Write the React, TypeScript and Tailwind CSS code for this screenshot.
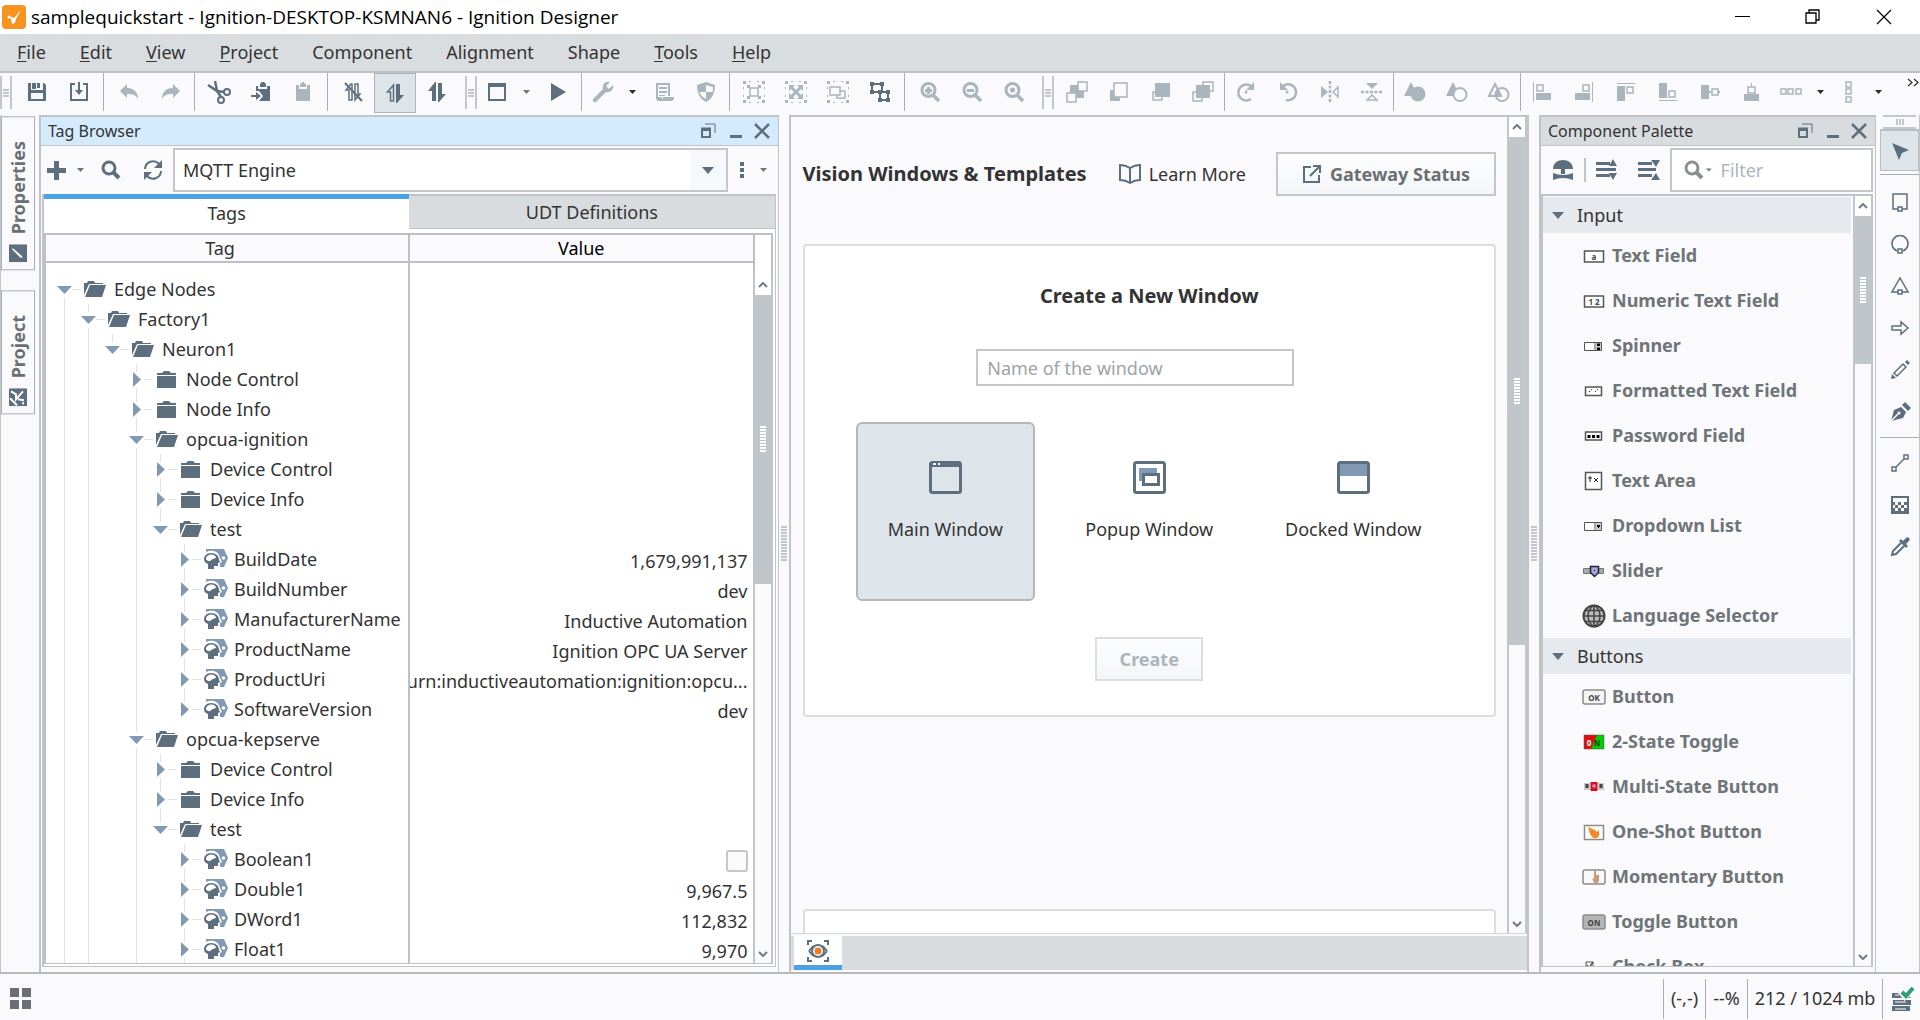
import { useState } from "react";
import type { ReactNode } from "react";

function Icon({ size = 24, className = "", children }: { size?: number; className?: string; children: ReactNode }) {
  return (
    <svg width={size} height={size} viewBox="0 0 24 24" fill="currentColor" aria-hidden className={`shrink-0 ${className}`}>
      {children}
    </svg>
  );
}

const line = { fill: "none", stroke: "currentColor", strokeWidth: 2 };
const thin = { fill: "none", stroke: "currentColor", strokeWidth: 1.5 };

const corners = (
  <path d="M1 1h3v3H1zM20 1h3v3h-3zM1 20h3v3H1zM20 20h3v3h-3zM7 1h2v1H7zM15 1h2v1h-2zM7 22h2v1H7zM15 22h2v1h-2zM1 7h1v2H1zM1 15h1v2H1zM22 7h1v2h-1zM22 15h1v2h-1z" />
);
const lens = (
  <>
    <circle cx="10.500" cy="10" r="6.500" {...line} strokeWidth={3} />
    <path d="M15 15l6 6" {...line} strokeWidth={3.5} />
  </>
);

const icons: Record<string, ReactNode> = {
  save: <path d="M3 3h3v7h12V3h1l2 2v16h-3v-8H6v8H3zM12 3h3v5h-3zM7 3h4v6H7zM6 19h12v2H6z" fillRule="evenodd" />,
  export: (
    <>
      <path d="M8 4H4v16h16V4h-4" {...line} />
      <path d="M11 2h2v8h3l-4 5-4-5h3z" />
    </>
  ),
  undo: <path d="M10 4v4c7 0 11 4 11 11-2-4-5-5-11-5v4l-7-7z" />,
  redo: <path d="M14 4v4C7 8 3 12 3 19c2-4 5-5 11-5v4l7-7z" />,
  cut: (
    <>
      <path d="M8 1l2 10 4 6M1 5l9 6 7 1" {...line} strokeWidth={2.5} />
      <circle cx="14" cy="20" r="3" {...line} />
      <circle cx="20" cy="12" r="3" {...line} />
    </>
  ),
  paste: (
    <>
      <path d="M7 6h2v3h9V6h3v15H10l4-5-4-5H7zM11 4l2-2h2l2 2v3h-6z" />
      <path d="M2 15h5v-3l5 4-5 4v-3H2z" />
    </>
  ),
  clipboard: <path d="M5 5h3v4h8V5h3v16H5zM9 4l2-1V2h2v1l2 1v3H9z" />,
  readOff: (
    <>
      <path d="M10 4l-5 6h3v10h3V4zM14 4v16l5-6h-2V4z" {...thin} />
      <path d="M4 3l17 18" {...line} />
    </>
  ),
  readOn: (
    <>
      <path d="M10.500 4l-6 7h3v9h3V4z" {...thin} />
      <path d="M13 3h4v11h4l-7 8h-1z" />
    </>
  ),
  readWrite: <path d="M11 2v19H7V11H3l7-9zM13 3h4v11h4l-7 8h-1z" />,
  window: (
    <>
      <rect x="4" y="4" width="16" height="16" {...line} />
      <path d="M3 3h18v4H3z" />
    </>
  ),
  play: <path d="M5 3l15 9-15 9z" />,
  wrench: <path d="M2 19L12 9c-1-4 2-8 7-7l-4 4 3 3 4-4c1 5-3 8-7 7L5 22c-2 1-4-1-3-3z" />,
  script: (
    <>
      <path d="M4 4h13v12M5 4v14h5" {...line} />
      <path d="M7 7h8v2H7zM7 11h8v2H7zM7 15h6v1H7zM11 17h11v2l-2 2H6l-2-2h7z" />
    </>
  ),
  shield: (
    <>
      <path d="M12 2l9 3c0 8-3 14-9 17C6 19 3 13 3 5z" />
      <path d="M12 5v7h6.500c.5-2 .5-3 .5-5zM12 12H5.500c1 3 3 5 6.500 7z" fill="#fafafd" />
    </>
  ),
  group: (
    <>
      {corners}
      <rect x="8" y="8" width="8" height="8" {...thin} />
      <path d="M5 5h3v3H5zM16 5h3v3h-3zM5 16h3v3H5zM16 16h3v3h-3z" />
    </>
  ),
  expand: (
    <>
      {corners}
      <path d="M5 5h6L9 7l3 3 3-3-2-2h6v6l-2-2-3 3 3 3 2-2v6h-6l2-2-3-3-3 3 2 2H5v-6l2 2 3-3-3-3-2 2z" />
    </>
  ),
  ungroup: (
    <>
      {corners}
      <path d="M4 7h10v8H4zM14 11h5v7h-8v-3" {...thin} />
    </>
  ),
  combine: (
    <>
      <path d="M4 4h10v8H4zM13 12h7v8h-8v-8" {...line} />
      <path d="M2 2h4v4H2zM12 2h4v4h-4zM2 10h4v4H2zM10 10h4v4h-4zM18 10h4v4h-4zM18 18h4v4h-4zM10 18h4v4h-4z" />
    </>
  ),
  zoomIn: (
    <>
      {lens}
      <path d="M9 7h3v2h2v3h-2v2H9v-2H7V9h2z" />
    </>
  ),
  zoomOut: (
    <>
      {lens}
      <path d="M7 9h7v3H7z" />
    </>
  ),
  zoomReset: (
    <>
      {lens}
      <circle cx="10.500" cy="10" r="2.500" />
    </>
  ),
  orderBackward: (
    <>
      <path d="M5 5h14v13H5z" />
      <path d="M13 2h9v9h-9zM2 13h9v9H2z" fill="#fafafd" stroke="currentColor" strokeWidth="1.500" />
    </>
  ),
  sendBack: (
    <>
      <path d="M3 10h10v11H3z" />
      <path d="M7 3h13v14H7z" fill="#fafafd" stroke="currentColor" strokeWidth="1.500" />
    </>
  ),
  bringFront: (
    <>
      <path d="M4 12h9v8H4z" {...thin} />
      <path d="M6 3h15v14H6z" />
    </>
  ),
  orderForward: (
    <>
      <path d="M12 2h10v9H12zM2 12h9v9H2z" {...thin} />
      <path d="M5 5h14v13H5z" />
    </>
  ),
  rotateCw: (
    <>
      <path d="M17 6a8 8 0 1 0 0 13" {...line} strokeWidth={2.5} />
      <path d="M20 2v8h-8z" />
      <circle cx="12" cy="12" r="1.500" />
    </>
  ),
  rotateCcw: (
    <>
      <path d="M7 6a8 8 0 1 1 3 14" {...line} strokeWidth={2.5} />
      <path d="M4 2v8h8z" />
      <circle cx="11" cy="12" r="1.500" />
    </>
  ),
  flipH: (
    <>
      <path d="M3 6l7 6-7 6z" />
      <path d="M20 7l-5 5 5 5z" {...thin} />
      <path d="M12 1v22" {...line} strokeWidth={2.5} strokeDasharray="3 1.500" />
    </>
  ),
  flipV: (
    <>
      <path d="M6 3h12l-6 6z" />
      <path d="M7 20l5-5 5 5z" {...thin} />
      <path d="M1 12h22" {...line} strokeWidth={2.5} strokeDasharray="3 1.500" />
    </>
  ),
  union: (
    <>
      <path d="M8 2l7 14H1z" />
      <circle cx="15" cy="14" r="7.500" />
    </>
  ),
  subtract: (
    <>
      <path d="M8 2l7 14H1z" />
      <circle cx="15" cy="14.500" r="6.500" fill="#fafafd" stroke="currentColor" strokeWidth="2" />
    </>
  ),
  intersect: (
    <>
      <path d="M8 4l6 12H2z" {...line} />
      <circle cx="15" cy="14.500" r="6.500" {...line} />
      <path d="M11 9l4 7H8z" />
    </>
  ),
  alignLeft: (
    <>
      <path d="M3 2h1v20H3zM6 13h15v7H6z" />
      <path d="M7 5h6v6H7z" {...thin} />
    </>
  ),
  alignRight: (
    <>
      <path d="M20 2h1v20h-1zM3 13h15v7H3z" />
      <path d="M11 5h6v6h-6z" {...thin} />
    </>
  ),
  alignTop: (
    <>
      <path d="M3 3h18v1H3zM3 6h8v15H3z" />
      <path d="M13 7h6v6h-6z" {...thin} />
    </>
  ),
  alignBottom: (
    <>
      <path d="M3 20h18v1H3zM3 3h8v15H3z" />
      <path d="M13 11h6v6h-6z" {...thin} />
    </>
  ),
  alignMiddle: (
    <>
      <path d="M3 5h8v14H3zM11 11h2v2h-2zM20 11h2v2h-2z" />
      <path d="M14 9h6v6h-6z" {...thin} />
    </>
  ),
  alignCenter: (
    <>
      <path d="M4 14h15v7H4zM11 3h1v3h-1z" />
      <path d="M8 7h7v6H8z" {...thin} />
    </>
  ),
  spaceH: <path d="M2 9h5v5H2zM9 9h5v5H9zM17 9h5v5h-5z" {...thin} />,
  spaceV: <path d="M9 2h5v5H9zM9 9h5v5H9zM9 17h5v5H9z" {...thin} />,
};

const DARK = "text-[#5d6f7e]";
const LIGHT = "text-[#abb5bd]";

type Tool = { icon: string; label: string; dark?: boolean; active?: boolean; menu?: boolean; darkMenu?: boolean };
type ToolGroup = { end: "wide" | "narrow" | "grip" | "none"; tools: Tool[] };

const toolGroups: ToolGroup[] = [
  {
    end: "wide",
    tools: [
      { icon: "save", label: "Save", dark: true },
      { icon: "export", label: "Update project", dark: true },
    ],
  },
  {
    end: "narrow",
    tools: [
      { icon: "undo", label: "Undo" },
      { icon: "redo", label: "Redo" },
    ],
  },
  {
    end: "wide",
    tools: [
      { icon: "cut", label: "Cut", dark: true },
      { icon: "paste", label: "Copy", dark: true },
      { icon: "clipboard", label: "Paste" },
    ],
  },
  {
    end: "grip",
    tools: [
      { icon: "readOff", label: "Comm off", dark: true },
      { icon: "readOn", label: "Comm read-only", dark: true, active: true },
      { icon: "readWrite", label: "Comm read/write", dark: true },
    ],
  },
  {
    end: "narrow",
    tools: [
      { icon: "window", label: "New window", dark: true, menu: true },
      { icon: "play", label: "Preview", dark: true },
    ],
  },
  {
    end: "narrow",
    tools: [
      { icon: "wrench", label: "Customizers", menu: true, darkMenu: true },
      { icon: "script", label: "Scripting" },
      { icon: "shield", label: "Security" },
    ],
  },
  {
    end: "wide",
    tools: [
      { icon: "group", label: "Group" },
      { icon: "expand", label: "Ungroup" },
      { icon: "ungroup", label: "Touch group" },
      { icon: "combine", label: "Select mode", dark: true },
    ],
  },
  {
    end: "grip",
    tools: [
      { icon: "zoomIn", label: "Zoom in" },
      { icon: "zoomOut", label: "Zoom out" },
      { icon: "zoomReset", label: "Reset zoom" },
    ],
  },
  {
    end: "none",
    tools: [
      { icon: "orderBackward", label: "Move backward" },
      { icon: "sendBack", label: "Send to back" },
      { icon: "bringFront", label: "Bring to front" },
      { icon: "orderForward", label: "Move forward" },
    ],
  },
  {
    end: "none",
    tools: [
      { icon: "rotateCw", label: "Rotate clockwise" },
      { icon: "rotateCcw", label: "Rotate counter-clockwise" },
      { icon: "flipH", label: "Flip horizontal" },
      { icon: "flipV", label: "Flip vertical" },
    ],
  },
  {
    end: "none",
    tools: [
      { icon: "union", label: "Union" },
      { icon: "subtract", label: "Difference" },
      { icon: "intersect", label: "Intersection" },
    ],
  },
  {
    end: "none",
    tools: [
      { icon: "alignLeft", label: "Align left" },
      { icon: "alignRight", label: "Align right" },
      { icon: "alignTop", label: "Align top" },
      { icon: "alignBottom", label: "Align bottom" },
      { icon: "alignMiddle", label: "Align middle" },
      { icon: "alignCenter", label: "Align center" },
      { icon: "spaceH", label: "Space horizontally", menu: true, darkMenu: true },
      { icon: "spaceV", label: "Space vertically", menu: true, darkMenu: true },
    ],
  },
];

const menus = ["File", "Edit", "View", "Project", "Component", "Alignment", "Shape", "Tools", "Help"];
const noMnemonic = ["Component", "Alignment", "Shape"];

// guides: ancestor depths whose vertical line runs through the row
type TagRow = {
  name: string;
  depth: number;
  kind: "open" | "closed" | "tag";
  guides: number[];
  last?: boolean;
  value?: string;
  checkbox?: boolean;
};

const tagRows: TagRow[] = [
  { name: "Edge Nodes", depth: 0, kind: "open", guides: [] },
  { name: "Factory1", depth: 1, kind: "open", guides: [0] },
  { name: "Neuron1", depth: 2, kind: "open", guides: [0, 1], last: true },
  { name: "Node Control", depth: 3, kind: "closed", guides: [0, 1] },
  { name: "Node Info", depth: 3, kind: "closed", guides: [0, 1] },
  { name: "opcua-ignition", depth: 3, kind: "open", guides: [0, 1] },
  { name: "Device Control", depth: 4, kind: "closed", guides: [0, 1, 3] },
  { name: "Device Info", depth: 4, kind: "closed", guides: [0, 1, 3] },
  { name: "test", depth: 4, kind: "open", guides: [0, 1, 3], last: true },
  { name: "BuildDate", depth: 5, kind: "tag", guides: [0, 1, 3], value: "1,679,991,137" },
  { name: "BuildNumber", depth: 5, kind: "tag", guides: [0, 1, 3], value: "dev" },
  { name: "ManufacturerName", depth: 5, kind: "tag", guides: [0, 1, 3], value: "Inductive Automation" },
  { name: "ProductName", depth: 5, kind: "tag", guides: [0, 1, 3], value: "Ignition OPC UA Server" },
  { name: "ProductUri", depth: 5, kind: "tag", guides: [0, 1, 3], value: "urn:inductiveautomation:ignition:opcu..." },
  { name: "SoftwareVersion", depth: 5, kind: "tag", guides: [0, 1, 3], last: true, value: "dev" },
  { name: "opcua-kepserve", depth: 3, kind: "open", guides: [0, 1] },
  { name: "Device Control", depth: 4, kind: "closed", guides: [0, 1, 3] },
  { name: "Device Info", depth: 4, kind: "closed", guides: [0, 1, 3] },
  { name: "test", depth: 4, kind: "open", guides: [0, 1, 3], last: true },
  { name: "Boolean1", depth: 5, kind: "tag", guides: [0, 1, 3], checkbox: true },
  { name: "Double1", depth: 5, kind: "tag", guides: [0, 1, 3], value: "9,967.5" },
  { name: "DWord1", depth: 5, kind: "tag", guides: [0, 1, 3], value: "112,832" },
  { name: "Float1", depth: 5, kind: "tag", guides: [0, 1, 3], value: "9,970" },
];

function Caret({ dark = false }: { dark?: boolean }) {
  return (
    <svg width="7" height="4" viewBox="0 0 7 4" aria-hidden className={dark ? "text-[#2b2b2b]" : "text-[#6f757a]"}>
      <path d="M0 0h7L3.500 4z" fill="currentColor" />
    </svg>
  );
}

function Grip() {
  return (
    <div aria-hidden className="mt-[3px] mb-1.5 flex w-3 shrink-0 items-center justify-center border-x-2 border-[#c3c6ca]">
      <div className="h-2 w-1.5 bg-[repeating-linear-gradient(#c3c6ca_0_2px,transparent_2px_3px)]" />
    </div>
  );
}

function TitleBar() {
  return (
    <header className="flex h-[34px] shrink-0 items-center bg-white pl-[2px] font-['Open_Sans',sans-serif] text-[19px] text-black">
      <svg width="24" height="24" viewBox="0 0 24 24" aria-hidden>
        <rect width="24" height="24" rx="4" fill="#f7931e" />
        <path d="M6 11l3 3 1 5 3-1 1-4 5-9-7 8-3-1z" fill="#fff" />
        <circle cx="7" cy="12" r="1.500" fill="#fff" />
      </svg>
      <h1 className="ml-[5px]">samplequickstart - Ignition-DESKTOP-KSMNAN6 - Ignition Designer</h1>
      <div className="ml-auto flex h-full">
        <button type="button" aria-label="Minimize" className="flex w-[70px] items-center justify-center">
          <svg width="16" height="16" viewBox="0 0 16 16"><path d="M0 7.500h15" stroke="#000" /></svg>
        </button>
        <button type="button" aria-label="Restore" className="flex w-[70px] items-center justify-center">
          <svg width="16" height="16" viewBox="0 0 16 16" fill="none" stroke="#000" strokeWidth="1.300">
            <path d="M1 4h10v10H1zM4 4V1h10v10h-3" />
          </svg>
        </button>
        <button type="button" aria-label="Close" className="flex w-[72px] items-center justify-center">
          <svg width="16" height="16" viewBox="0 0 16 16"><path d="M1 1l14 14M15 1L1 15" stroke="#000" strokeWidth="1.200" /></svg>
        </button>
      </div>
    </header>
  );
}

function MenuBar() {
  return (
    <nav className="flex h-[39px] shrink-0 items-center border-b-2 border-[#bfbfc5] bg-[#dadddf]">
      {menus.map((m) => (
        <button key={m} type="button" className="px-[17px] text-[18px] text-[#333]">
          {noMnemonic.includes(m) ? m : <><span className="underline underline-offset-2">{m[0]}</span>{m.slice(1)}</>}
        </button>
      ))}
    </nav>
  );
}

function Toolbar() {
  return (
    <div role="toolbar" aria-label="Main toolbar" className="flex h-[42px] shrink-0 overflow-hidden">
      <Grip />
      <div className="w-1 shrink-0" />
      {toolGroups.map((g, i) => (
        <div key={i} className="flex shrink-0">
          {g.tools.map((t) => (
            <div key={t.icon} className="flex">
              <button
                type="button"
                aria-label={t.label}
                aria-pressed={t.active}
                className={`flex items-center justify-center ${t.menu ? "w-9" : "w-[42px]"} ${t.dark ? DARK : LIGHT} ${
                  t.active ? "mb-0.5 border border-[#abb5bd] bg-[#dde4ea]" : "pb-1"
                }`}
              >
                <Icon>{icons[t.icon]}</Icon>
              </button>
              {t.menu && (
                <button type="button" aria-label={`${t.label} options`} className="flex w-[22px] items-center justify-center pb-1">
                  <Caret dark={t.darkMenu} />
                </button>
              )}
            </div>
          ))}
          {g.end === "wide" && <div className="mr-1 ml-[3px] h-[38px] w-px bg-[#a9aeb3]" />}
          {g.end === "narrow" && <div className="mr-[3px] ml-[2px] h-[38px] w-px bg-[#a9aeb3]" />}
          {g.end === "none" && i < toolGroups.length - 1 && <div className="h-[38px] w-px bg-[#a9aeb3]" />}
          {g.end === "grip" && (
            <div className="ml-[7px] flex">
              <Grip />
              <div className="w-[2px]" />
            </div>
          )}
        </div>
      ))}
      <button type="button" aria-label="More tools" className="mt-[3px] ml-auto h-3 text-[#2b2b2b]">
        <svg width="13" height="9" viewBox="0 0 13 9" fill="none" stroke="currentColor" strokeWidth="1.200">
          <path d="M1 1l4 3.500L1 8M7 1l4 3.500L7 8" />
        </svg>
      </button>
    </div>
  );
}

function SideTab({ label, children }: { label: string; children: ReactNode }) {
  return (
    <button
      type="button"
      className="flex w-[34px] rotate-180 items-center gap-2.5 border border-[#a9aeb3] bg-[#fafafd] pt-[7px] pb-6 text-[18px] font-bold text-[#6b6f73] [writing-mode:vertical-rl]"
    >
      <svg width="18" height="18" viewBox="0 0 18 18" aria-hidden className="rotate-180">
        <rect width="18" height="18" rx="1" fill="#5d6f7e" />
        {children}
      </svg>
      {label}
    </button>
  );
}

function ScrollBar({ thumb, rest }: { thumb: number; rest: number }) {
  return (
    <div aria-hidden className="flex w-5 shrink-0 flex-col border-r-2 border-l-2 border-[#c0c6ca] bg-[#fafafd]">
      <div className="flex h-5 shrink-0 items-center justify-center bg-white">
        <svg width="10" height="6" viewBox="0 0 10 6"><path d="M1 5l4-4 4 4" fill="none" stroke="#6f7a83" strokeWidth="2" /></svg>
      </div>
      <div className="flex items-center justify-center bg-[#c0c6ca]" style={{ flexGrow: thumb, flexBasis: 0 }}>
        <div className="h-[26px] w-1.5 bg-[repeating-linear-gradient(#fff_0_2px,transparent_2px_3px)]" />
      </div>
      <div style={{ flexGrow: rest, flexBasis: 0 }} />
      <div className="flex h-[18px] shrink-0 items-center justify-center">
        <svg width="10" height="6" viewBox="0 0 10 6"><path d="M1 1l4 4 4-4" fill="none" stroke="#6f7a83" strokeWidth="2" /></svg>
      </div>
    </div>
  );
}

function Splitter() {
  return (
    <div aria-hidden className="flex w-2.5 shrink-0 items-center justify-center">
      <div className="h-9 w-1.5 bg-[repeating-linear-gradient(#c0c6ca_0_2px,transparent_2px_3px)]" />
    </div>
  );
}

function PanelTitle({ title, focused = false }: { title: string; focused?: boolean }) {
  return (
    <div className={`flex h-[29px] shrink-0 items-center border-b border-[#c0c4c9] pl-[7px] ${focused ? "bg-[#d4ebfd]" : "bg-[#d8dcdf]"}`}>
      <h2 className="text-[16px] text-[#333]">{title}</h2>
      <div className="ml-auto flex items-center pr-1 text-[#5d6f7e]">
        <button type="button" aria-label={`Float ${title}`} className="flex w-7 justify-center">
          <svg width="16" height="16" viewBox="0 0 16 16" fill="none" stroke="currentColor"><path d="M2 7h8v7H2z" strokeWidth="2" /><path d="M1 6h10" strokeWidth="3" /><path d="M5 1h10v9" /></svg>
        </button>
        <button type="button" aria-label={`Minimize ${title}`} className="flex w-7 justify-center">
          <svg width="16" height="16" viewBox="0 0 16 16"><path d="M2 12h12v3H2z" fill="currentColor" /></svg>
        </button>
        <button type="button" aria-label={`Close ${title}`} className="flex w-6 justify-center">
          <svg width="16" height="16" viewBox="0 0 16 16" stroke="currentColor" strokeWidth="2.500"><path d="M1 1l14 14M15 1L1 15" /></svg>
        </button>
      </div>
    </div>
  );
}

function Search({ className = "" }: { className?: string }) {
  return (
    <Icon className={className}>
      <circle cx="10" cy="10" r="6" {...line} strokeWidth={3} />
      <path d="M14 14l6 6" {...line} strokeWidth={4} />
    </Icon>
  );
}

function NodeIcon({ kind }: { kind: TagRow["kind"] }) {
  if (kind === "open") {
    return (
      <svg width="22" height="18" viewBox="0 0 22 18" fill="#5d6f7e" aria-hidden>
        <path d="M0 3h3l1-2h6l1 2h8v1H5L0 15zM6 5h16l-4 12H1z" />
      </svg>
    );
  }
  if (kind === "closed") {
    return (
      <svg width="22" height="18" viewBox="0 0 22 18" fill="#5d6f7e" aria-hidden>
        <path d="M1 3h5l2-2h5l2 2h5v2H1zM1 6h19v12H1z" />
      </svg>
    );
  }
  return (
    <svg width="24" height="20" viewBox="0 0 24 20" aria-hidden>
      <path d="M2 0h18l4 9-4 9H2z" fill="#8199b3" />
      <path d="M0 3h2c6-3 13-1 14 6l2 4-2 1v4h-3v2H0z" fill="#fff" />
      <path d="M7 4c5 0 8 3 8 7l1 2-2 1v3h-4v3H4v-5c-3-1-4-3-4-5 0-3 3-6 7-6z" fill="#5d6f7e" />
      <path d="M2 10c0-3 3-4.500 5.500-4.500S12 7 12 8.500c0 1-3 1-4 2s-2 2-3.500 1.500S2 11 2 10z" fill="#fff" />
      <circle cx="19.500" cy="9" r="1.800" fill="#fff" />
    </svg>
  );
}

// Expander arrow with the branch lines that meet it
function Branch({ row }: { row: TagRow }) {
  const open = row.kind === "open";
  return (
    <svg width="32" height="30" viewBox="0 0 32 30" aria-hidden className="shrink-0">
      <path
        d={`${row.depth > 0 ? "M12.500 0v8" : ""}${row.last ? "" : "M12.500 24v6"}M20 15.500h9`}
        stroke="#dfe3e7"
        fill="none"
      />
      <path d={open ? "M5 12h15l-7.500 8z" : "M9 8v15l8-7.500z"} fill="#8199b3" />
    </svg>
  );
}

function TagTable() {
  return (
    <div className="mt-[3px] mr-[2px] mb-[2px] flex min-h-0 flex-1 border-t-2 border-b border-l-2 border-[#bfbfc5] bg-white">
      <div className="min-w-0 flex-1 overflow-hidden">
        <table className="w-full table-fixed border-collapse text-[18px]/[26px] text-[#333]">
          <colgroup>
            <col className="w-[363px]" />
            <col />
          </colgroup>
          <thead>
            <tr className="h-[27px] bg-[#fafafd]">
              <th className="border-r-2 border-b-2 border-[#bfbfc5] p-0 pr-3.5 text-[18px]/[24px] font-normal">Tag</th>
              <th className="border-b-2 border-[#bfbfc5] p-0 text-[18px]/[24px] font-normal text-black">Value</th>
            </tr>
          </thead>
          <tbody>
            <tr className="h-3"><td className="border-r-2 border-[#bfbfc5] p-0" /><td className="p-0" /></tr>
            {tagRows.map((row, i) => (
              <tr key={i} className="h-[30px]">
                <td className="border-r-2 border-[#bfbfc5] p-0 pl-1.5">
                  <div className="flex h-[30px] items-center whitespace-nowrap">
                    {Array.from({ length: row.depth }, (_, d) => (
                      <div key={d} className="flex h-full w-6 shrink-0 justify-center">
                        {row.guides.includes(d) && <div className="h-full w-px bg-[#dfe3e7]" />}
                      </div>
                    ))}
                    <Branch row={row} />
                    <span className="flex w-[30px] shrink-0"><NodeIcon kind={row.kind} /></span>
                    <span>{row.name}</span>
                  </div>
                </td>
                <td className="p-0 pr-[5px]">
                  <div className="flex h-[30px] items-center justify-end overflow-hidden pt-[3px] whitespace-nowrap">
                    {row.value}
                    {row.checkbox && (
                      <input
                        type="checkbox"
                        aria-label={row.name}
                        className="size-[22px] appearance-none rounded-[3px] border-2 border-[#c3c6ca] bg-[#fafafd] checked:bg-[#4aa3e0]"
                      />
                    )}
                  </div>
                </td>
              </tr>
            ))}
          </tbody>
        </table>
      </div>
      <div className="flex flex-col">
        <div className="h-10 border-x-2 border-[#bfbfc5] bg-white" />
        <div className="flex flex-1"><ScrollBar thumb={289} rest={362} /></div>
      </div>
    </div>
  );
}

function TagBrowser() {
  const [tab, setTab] = useState("Tags");
  return (
    <section className="flex min-w-0 flex-1 flex-col border-t-2 border-r border-l-2 border-[#c0c4c9] bg-[#fafafd]">
      <PanelTitle title="Tag Browser" focused />
      <div className="flex h-12 shrink-0 items-center pr-1.5 pl-[3px] text-[#5d6f7e]">
        <button type="button" aria-label="Add tag" className="flex w-[26px] justify-center"><Icon><path d="M9 3h5v7h7v5h-7v7H9v-7H2v-5h7z" /></Icon></button>
        <button type="button" aria-label="Add tag options" className="flex w-5 justify-center"><Caret /></button>
        <button type="button" aria-label="Search tags" className="flex w-[42px] justify-center"><Search /></button>
        <button type="button" aria-label="Refresh" className="flex w-[41px] justify-center">
          <Icon>
            <path d="M4 11a8 8 0 0 1 14-5M20 13a8 8 0 0 1-14 5" {...line} />
            <path d="M21 2v8h-8zM3 22v-8h8z" />
          </Icon>
        </button>
        <div className="grid h-11 flex-1 border-2 border-[#c3c6ca] bg-white">
          <select
            aria-label="Tag provider"
            className="col-start-1 row-start-1 appearance-none bg-transparent pl-2 text-[18px] text-[#333] outline-none"
          >
            <option>MQTT Engine</option>
          </select>
          <div aria-hidden className="pointer-events-none col-start-1 row-start-1 flex w-9 items-center justify-center justify-self-end bg-[#f7f8fb]">
            <svg width="12" height="7" viewBox="0 0 14 8"><path d="M0 0h14L7 8z" fill="#5d6f7e" /></svg>
          </div>
        </div>
        <button type="button" aria-label="More options" className="flex w-7 justify-center"><Icon><path d="M10 4h4v4h-4zM10 10h4v4h-4zM10 16h4v4h-4z" /></Icon></button>
        <button type="button" aria-label="Tag menu" className="flex w-4 justify-center"><Caret /></button>
      </div>
      <div className="mr-[2px] mb-[5px] ml-px flex min-h-0 flex-1 flex-col border-r border-b border-l-2 border-[#c0c4c9] bg-white">
        <div role="tablist" className="flex h-9 shrink-0">
          {["Tags", "UDT Definitions"].map((t) => (
            <button
              key={t}
              type="button"
              role="tab"
              aria-selected={tab === t}
              onClick={() => setTab(t)}
              className={
                tab === t
                  ? "flex-1 border-t-5 border-[#4aa3e0] bg-white pb-[3px] text-[18px] text-[#333]"
                  : "mb-px flex-1 border-t-2 border-b border-[#c0c4c9] bg-[#d8dcdf] pt-px text-[18px] text-[#333]"
              }
            >
              {t}
            </button>
          ))}
        </div>
        <TagTable />
      </div>
    </section>
  );
}

const windowKinds = [
  {
    name: "Main Window",
    icon: (
      <>
        <rect x="1.500" y="1.500" width="30" height="30" rx="2" fill="none" stroke="#5d6f7e" strokeWidth="3" />
        <path d="M1 1h31v5H1z" fill="#5d6f7e" />
        <path d="M4 2h3v2H4zM9 2h2v2H9z" fill="#fff" />
      </>
    ),
  },
  {
    name: "Popup Window",
    icon: (
      <>
        <rect x="1.500" y="1.500" width="30" height="30" rx="2" fill="none" stroke="#5d6f7e" strokeWidth="3" />
        <path d="M6 7h18v13H6z" fill="#8199b3" />
        <path d="M10.500 13.500h15v10h-15z" fill="#fff" stroke="#5d6f7e" strokeWidth="3" />
      </>
    ),
  },
  {
    name: "Docked Window",
    icon: (
      <>
        <path d="M3 3h27v12H3z" fill="#8199b3" />
        <rect x="1.500" y="1.500" width="30" height="30" rx="2" fill="none" stroke="#5d6f7e" strokeWidth="3" />
      </>
    ),
  },
];

function Workspace() {
  const [kind, setKind] = useState("Main Window");
  return (
    <main className="flex min-w-0 flex-1 flex-col border-x-2 border-t-2 border-[#c0c4c9]">
      <div className="flex min-h-0 flex-1 border-b border-[#d5d8db]">
        <div className="flex min-w-0 flex-1 flex-col overflow-hidden pr-[11px] pl-3 text-[#333]">
          <div className="mt-[35px] flex h-11 shrink-0 items-center">
            <h2 className="mr-auto text-[20px] font-bold">Vision Windows &amp; Templates</h2>
            <a href="#learn" className="flex items-center gap-2 text-[18px]">
              <svg width="22" height="20" viewBox="0 0 22 20" fill="none" stroke="#5d6f7e" strokeWidth="2" aria-hidden>
                <path d="M11 4C8 2 5 1 1 1v15c4 0 7 1 10 3 3-2 6-3 10-3V1c-4 0-7 1-10 3zM11 4v15" />
              </svg>
              Learn More
            </a>
            <button
              type="button"
              className="ml-[30px] flex h-11 w-[220px] items-center justify-center gap-2 border-2 border-[#c3c6ca] bg-linear-to-b from-[#fdfdfe] to-[#f3f6f8] text-[18px] font-bold text-[#6b6f73]"
            >
              <svg width="20" height="20" viewBox="0 0 20 20" fill="none" stroke="#5d6f7e" strokeWidth="2" aria-hidden>
                <path d="M9 3H2v15h15v-7M11 2h7v7M18 2l-10 10" />
              </svg>
              Gateway Status
            </button>
          </div>

          <div className="mt-12 flex shrink-0 flex-col items-center rounded border-2 border-[#dcdddf] bg-white pb-[34px]">
            <h3 className="mt-[35px] text-[20px]/[30px] font-bold">Create a New Window</h3>
            <input
              aria-label="Window name"
              placeholder="Name of the window"
              className="mt-[38px] mr-7 h-[37px] w-[318px] border-2 border-[#c3c6ca] pl-[9px] text-[18px] outline-none placeholder:text-[#a0a3a6]"
            />
            <div className="mt-9 flex gap-[25px]">
              {windowKinds.map((w) => (
                <button
                  key={w.name}
                  type="button"
                  aria-pressed={kind === w.name}
                  onClick={() => setKind(w.name)}
                  className={`flex size-[179px] flex-col items-center rounded-md border-2 pt-[37px] text-[18px] ${
                    kind === w.name ? "border-[#b4b8bc] bg-[#dde4ea]" : "border-transparent"
                  }`}
                >
                  <svg width="33" height="33" viewBox="0 0 33 33" aria-hidden>{w.icon}</svg>
                  <span className="mt-[22px]">{w.name}</span>
                </button>
              ))}
            </div>
            <button type="button" disabled className="mt-9 h-11 w-[108px] border-2 border-[#dcdddf] bg-linear-to-b from-[#fdfdfe] to-[#f3f6f8] text-[18px] font-bold text-[#abb5bd]">
              Create
            </button>
          </div>

          <div className="mt-48 h-40 shrink-0 rounded border-2 border-[#dcdddf] bg-white" />
        </div>
        <ScrollBar thumb={508} rest={270} />
      </div>
      <div className="mt-[2px] mb-[2px] flex h-[34px] shrink-0 bg-[#d8dcdf] pl-[3px]">
        <button type="button" aria-label="Vision workspace" className="flex w-12 items-center justify-center border-b-5 border-[#4aa3e0] bg-white">
          <svg width="24" height="24" viewBox="0 0 24 24" fill="none" stroke="#5d6f7e" strokeWidth="2">
            <path d="M2 6V2h4M22 6V2h-4M2 18v4h4M22 18v4h-4M3 12q3-4 5-5M3 12q3 4 5 5M21 12q-3-4-5-5M21 12q-3 4-5 5" />
            <circle cx="12" cy="12" r="6" stroke="#5d6f7e" />
            <circle cx="12" cy="12" r="3.500" fill="#f47b20" stroke="none" />
          </svg>
        </button>
      </div>
    </main>
  );
}

const box = (children: ReactNode, h = 11) => (
  <>
    <rect x="2.500" y={12.5 - h / 2} width="19" height={h} fill="#fff" stroke="#555" strokeWidth="1.500" />
    {children}
  </>
);

function tiny(text: string, fill = "#444", x = 12) {
  return (
    <text x={x} y="15.500" textAnchor="middle" fontSize="8" fontWeight="bold" fill={fill}>
      {text}
    </text>
  );
}

const pill = (fill: string, children: ReactNode) => (
  <>
    <rect x="1" y="5" width="22" height="14" rx="2" fill={fill} stroke="#8c8c8c" strokeWidth="1.500" />
    {children}
  </>
);

const palette: { group: string; items: { name: string; icon: ReactNode }[] }[] = [
  {
    group: "Input",
    items: [
      { name: "Text Field", icon: box(tiny("a")) },
      { name: "Numeric Text Field", icon: box(tiny("1 2")) },
      {
        name: "Spinner",
        icon: <><path d="M2.500 8.500h17v8h-17zM13 8.500v8" fill="#fff" stroke="#555" /><path d="M14 9h5v7h-5z" fill="#ccc" /><path d="M15 9.500h3v2.500h-3zM15 13.500h3v2.500h-3z" fill="#000" /></>,
      },
      {
        name: "Formatted Text Field",
        icon: <><path d="M3.500 8h16v8.500h-16z" fill="#fff" stroke="#555" strokeWidth="1.500" /><path d="M7 13l3-3M13 13l3-3" stroke="#333" strokeDasharray="1.500 1" /></>,
      },
      {
        name: "Password Field",
        icon: <><path d="M3.500 8h16v8h-16z" fill="#fff" stroke="#555" strokeWidth="1.500" /><path d="M5.500 11h3v3h-3zM10 11h3v3h-3zM14.500 11h3v3h-3z" fill="#000" /></>,
      },
      {
        name: "Text Area",
        icon: <><path d="M3.500 3.500h16v17h-16z" fill="#fff" stroke="#555" strokeWidth="1.500" /><path d="M8 7v6M6 9h4M12 9l4 4M16 9l-4 4" stroke="#222" fill="none" /></>,
      },
      {
        name: "Dropdown List",
        icon: <><path d="M2.500 8.500h17v8h-17zM13 8.500v8" fill="#fff" stroke="#555" /><path d="M14 9h5v7h-5z" fill="#ccc" /><path d="M15 11h3v2h-1v1h-1v-1h-1z" fill="#000" /></>,
      },
      {
        name: "Slider",
        icon: <><path d="M1.500 9.500h20v5h-20z" fill="#aaa" stroke="#777" /><path d="M8.500 7.500h8v6l-4 4-4-4z" fill="#a9a4e0" stroke="#223" strokeWidth="1.500" /><path d="M12 11h1v1h-1z" fill="#000" /></>,
      },
      {
        name: "Language Selector",
        icon: <><circle cx="12" cy="12" r="10.500" fill="#bbb" stroke="#444" strokeWidth="2" /><path d="M12 1v22M1 12h22M3 6.500h18M3 17.500h18M12 1c-8 6-8 16 0 22M12 1c8 6 8 16 0 22" fill="none" stroke="#444" strokeWidth="1.500" /></>,
      },
    ],
  },
  {
    group: "Buttons",
    items: [
      { name: "Button", icon: pill("#f4f4f4", tiny("OK")) },
      {
        name: "2-State Toggle",
        icon: <><path d="M2 5h20v14H2z" fill="#e01010" /><path d="M15 5h7v14H9z" fill="#0c0" /><path d="M2 5h20v14H2z" fill="none" stroke="#555" strokeOpacity=".5" />{tiny("0", "#fff", 7)}{tiny("N", "#040", 15)}</>,
      },
      {
        name: "Multi-State Button",
        icon: <><path d="M2 8h6v7H2zM16 8h6v7h-6z" fill="#c9c9c9" /><path d="M3.500 9h3v4h-3zM17.500 9h3v4h-3z" fill="#444" /><path d="M8.500 7h7v9h-7z" fill="#d01025" /><path d="M10.500 9.500h3v3h-3z" fill="#f3a0a8" /></>,
      },
      {
        name: "One-Shot Button",
        icon: <><path d="M2.500 5.500h19v14h-19z" fill="#fff" stroke="#8c8c8c" strokeWidth="1.500" /><path d="M6 7l7 3 2 2 2-2v6l-2 2h-4l-3-4z" fill="#f58a2c" /></>,
      },
      {
        name: "Momentary Button",
        icon: pill("#f8f8f8", <path d="M12 6h2v4h3v5l-1 3h-4l-2-5 2 1z" fill="#c99a78" />),
      },
      { name: "Toggle Button", icon: pill("#b5b5b5", tiny("ON")) },
      {
        name: "Check Box",
        icon: <><path d="M4 7h7v8H4z" fill="#fff" stroke="#555" /><path d="M5 10l2 3 4-6M13 13h9" stroke="#555" fill="none" strokeWidth="1.500" /></>,
      },
    ],
  },
];

function ComponentPalette() {
  return (
    <section className="flex w-[337px] shrink-0 flex-col border-t-2 border-r border-l-2 border-[#c0c4c9] bg-[#fafafd]">
      <PanelTitle title="Component Palette" />
      <div className="flex h-12 shrink-0 items-center pr-[2px] text-[#5d6f7e]">
        <button type="button" aria-label="Palette mode" className="flex w-[43px] justify-center">
          <Icon><path d="M2 11C2 -1 22 -1 22 11zM10 11h4v5h-4zM2 15q10 4 20 0v7q-10-4-20 0z" /></Icon>
        </button>
        <div aria-hidden className="h-6 w-[2px] bg-[#c0c4c9]" />
        <button type="button" aria-label="Expand all" className="flex w-[42px] justify-center">
          <Icon><path d="M1 4h14v3H1zM1 10h20v3H1zM1 16h14v3H1zM14 8l4-7 4 7zM14 15h8l-4 7z" /></Icon>
        </button>
        <button type="button" aria-label="Collapse all" className="flex w-[42px] justify-center">
          <Icon><path d="M1 4h14v3H1zM1 10h18v3H1zM1 16h14v3H1zM14 2h9l-4 7zM14 22h9l-4-7z" /></Icon>
        </button>
        <label className="flex h-11 min-w-0 flex-1 items-center border-2 border-[#c3c6ca] bg-white pl-2.5 text-[#8c8f92]">
          <Search />
          <Caret />
          <input aria-label="Filter components" placeholder="Filter" className="ml-[9px] w-full min-w-0 text-[18px] text-[#333] outline-none placeholder:text-[#abb5bd]" />
        </label>
      </div>
      <div className="mr-[2px] mb-[5px] flex min-h-0 flex-1 border-t-2 border-b border-l-2 border-[#c0c4c9]">
        <div className="min-w-0 flex-1 overflow-hidden pt-px pr-[2px]">
          {palette.map((g) => (
            <div key={g.group}>
              <h3 className="flex h-9 items-center gap-[13px] bg-[#e6e9ed] pl-[9px] text-[18px] text-[#333]">
                <svg width="12" height="7" viewBox="0 0 12 7" aria-hidden><path d="M0 0h12L6 7z" fill="#5d6f7e" /></svg>
                {g.group}
              </h3>
              <ul>
                {g.items.map((it) => (
                  <li key={it.name}>
                    <button type="button" className="flex h-[45px] w-full items-center gap-[6px] pl-[39px] text-left text-[18px] font-bold whitespace-nowrap text-[#6f7478]">
                      <Icon>{it.icon}</Icon>
                      {it.name}
                    </button>
                  </li>
                ))}
              </ul>
            </div>
          ))}
        </div>
        <ScrollBar thumb={148} rest={584} />
      </div>
    </section>
  );
}

const drawTools: { label: string; icon: ReactNode }[] = [
  { label: "Rectangle", icon: <><path d="M10 19H5V4h14v15h-5" {...line} strokeWidth={1.5} /><path d="M10 17h4v4h-4z" {...thin} /></> },
  { label: "Ellipse", icon: <><path d="M9 19a8 8 0 1 1 6 0" {...thin} /><path d="M10 17h4v4h-4z" {...thin} /></> },
  { label: "Polygon", icon: <><path d="M10 18H4l8-14 8 14h-6" {...thin} /><path d="M10 16h4v4h-4z" {...thin} /></> },
  { label: "Arrow", icon: <path d="M4 10h9V6l7 6-7 6v-4H4z" {...thin} /> },
  { label: "Pencil", icon: <><path d="M3 21l1-5 4 4zM17 4l2-2 3 3-2 2z" /><path d="M6 15l9-9 3 3-9 9z" {...thin} /></> },
  { label: "Pen", icon: <><path d="M3 21l3-11 7-3 5 5-3 6z" /><path d="M14 5l3-3 6 6-3 3z" /><path d="M3 21l7-7" stroke="#fafafd" strokeWidth="1.500" /><circle cx="11" cy="13" r="1.500" fill="#fafafd" /></> },
  { label: "Line", icon: <><path d="M4 16h4v4H4zM16 4h4v4h-4zM8 16l8-8" {...thin} /></> },
  { label: "Gradient", icon: <><path d="M4 4h16v16H4z" {...line} /><path d="M4 9h3v3H4zM10 9h3v3h-3zM16 9h3v3h-3zM7 12h3v3H7zM13 12h3v3h-3zM4 15h3v3H4zM10 15h3v3h-3zM16 15h3v3h-3zM4 18h16v2H4z" /></> },
  { label: "Eyedropper", icon: <><path d="M13 4l2 2 3-3c2-2 5 1 3 3l-3 3 2 2-2 2-7-7z" /><path d="M13 8l-8 8-1 4 4-1 8-8" {...line} /></> },
];

function DrawToolbar() {
  return (
    <div role="toolbar" aria-label="Drawing tools" className="flex w-11 shrink-0 flex-col border-r border-[#c0c4c9] pl-1 text-[#5d6f7e]">
      <div aria-hidden className="mx-[3px] flex h-3.5 items-center justify-center border-y-2 border-[#c3c6ca]">
        <div className="h-1.5 w-2 bg-[repeating-linear-gradient(90deg,#c3c6ca_0_2px,transparent_2px_3px)]" />
      </div>
      <button type="button" aria-label="Select" aria-pressed className="flex h-[42px] items-center justify-center border border-t-2 border-[#b9bec3] bg-[#dde4ea]">
        <Icon><path d="M4 4l17 7-7 3-3 7z" /></Icon>
      </button>
      <div className="mt-[3px] h-px bg-[#a9aeb3]" />
      <div className="flex flex-col pt-1.5">
        {drawTools.map((t) => (
          <div key={t.label} className="flex flex-col">
            {t.label === "Line" && <div className="my-1 h-px bg-[#a9aeb3]" />}
            <button type="button" aria-label={t.label} className="flex h-[42px] items-center justify-center"><Icon>{t.icon}</Icon></button>
          </div>
        ))}
      </div>
    </div>
  );
}

function StatusBar() {
  return (
    <footer className="flex h-[48px] shrink-0 items-center border-t-2 border-[#b5b8bc] pt-[3px] text-[18px] text-[#333]">
      <button type="button" aria-label="Start page" className="ml-2.5">
        <svg width="21" height="21" viewBox="0 0 21 21" fill="#6b6f73"><path d="M0 0h9v9H0zM12 0h9v9h-9zM0 12h9v9H0zM12 12h9v9h-9z" /></svg>
      </button>
      <div className="ml-auto flex h-10">
        <span className="flex w-[42px] items-center justify-center border-l border-[#a9aeb3]">(-,-)</span>
        <span className="flex w-[42px] items-center justify-center border-l border-[#a9aeb3]">--%</span>
        <span className="flex w-[135px] items-center justify-center border-l border-[#a9aeb3]">212 / 1024 mb</span>
        <span className="flex w-[38px] items-center border-l border-[#a9aeb3] pl-2">
          <svg width="24" height="24" viewBox="0 0 24 24" role="img" aria-label="Gateway connected">
            <path d="M1 6h18v5H1zM2 13h18v5H2zM1 19h18v5H1z" fill="#5d6f7e" />
            <path d="M4 8h4M4 15h11M4 22h11" stroke="#fff" />
            <path d="M10 4l4 5 9-8" fill="none" stroke="#fafafd" strokeWidth="7" />
            <path d="M11 5l4 4 7-8" fill="none" stroke="#2f9e78" strokeWidth="4" />
          </svg>
        </span>
      </div>
    </footer>
  );
}

export default function App() {
  return (
    <div className="flex h-screen flex-col overflow-hidden bg-[#fafafd] font-['Noto_Sans',sans-serif]">
      <TitleBar />
      <MenuBar />
      <Toolbar />
      <div className="flex min-h-0 flex-1">
        <aside className="flex w-[39px] shrink-0 flex-col gap-5 border-l border-[#c0c4c9] pt-px">
          <SideTab label="Properties">
            <path d="M4 4l8 7 2 3-3-1-8-8z" fill="#fff" />
          </SideTab>
          <SideTab label="Project">
            <path d="M2 3l5 3v5l7-8M1 10l5 5 2 2M9 11l6 1M13 15h2" stroke="#fff" strokeWidth="2" fill="none" />
          </SideTab>
        </aside>
        <TagBrowser />
        <Splitter />
        <Workspace />
        <Splitter />
        <ComponentPalette />
        <DrawToolbar />
      </div>
      <StatusBar />
    </div>
  );
}
